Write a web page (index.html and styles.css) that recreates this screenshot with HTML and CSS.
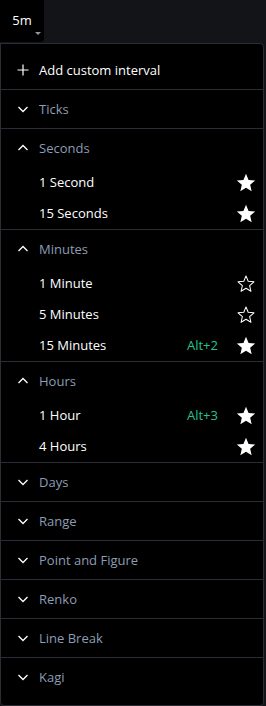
FILE: index.html
```html
<!DOCTYPE html>
<html>
<head>
<meta charset="utf-8">
<link rel="stylesheet" href="styles.css">
</head>
<body>
<div class="toolbar">
  <button class="interval-btn">5m<span class="caret"></span></button>
</div>
<div class="menu">
  <div class="row add">
    <svg class="ico" viewBox="0 0 12 12" width="12" height="12"><path d="M6 0.5v11M0.5 6h11" stroke="#fff" stroke-width="1.2" fill="none"/></svg>
    <span class="label">Add custom interval</span>
  </div>

  <div class="section">
    <div class="row head"><svg class="ico" viewBox="0 0 12 12" width="12" height="12"><path d="M1.5 4l4.5 4.5L10.5 4" stroke="#fff" stroke-width="1.3" fill="none"/></svg><span class="label">Ticks</span></div>
  </div>

  <div class="section">
    <div class="row head"><svg class="ico" viewBox="0 0 12 12" width="12" height="12"><path d="M1.5 8l4.5-4.5L10.5 8" stroke="#fff" stroke-width="1.3" fill="none"/></svg><span class="label">Seconds</span></div>
    <div class="row item"><span class="label">1 Second</span><svg class="star" viewBox="0 0 24 24"><path class="full" d="M12 17.27L18.18 21l-1.64-7.03L22 9.24l-7.19-.61L12 2 9.19 8.63 2 9.24l5.46 4.73L5.82 21z"/></svg></div>
    <div class="row item"><span class="label">15 Seconds</span><svg class="star" viewBox="0 0 24 24"><path class="full" d="M12 17.27L18.18 21l-1.64-7.03L22 9.24l-7.19-.61L12 2 9.19 8.63 2 9.24l5.46 4.73L5.82 21z"/></svg></div>
  </div>

  <div class="section">
    <div class="row head"><svg class="ico" viewBox="0 0 12 12" width="12" height="12"><path d="M1.5 8l4.5-4.5L10.5 8" stroke="#fff" stroke-width="1.3" fill="none"/></svg><span class="label">Minutes</span></div>
    <div class="row item"><span class="label">1 Minute</span><svg class="star" viewBox="0 0 24 24"><path class="empty" d="M12 16.6l5.4 3.3-1.45-6.15L20.7 9.6l-6.3-.54L12 3.2 9.6 9.06l-6.3.54 4.75 4.15L6.6 19.9z"/></svg></div>
    <div class="row item"><span class="label">5 Minutes</span><svg class="star" viewBox="0 0 24 24"><path class="empty" d="M12 16.6l5.4 3.3-1.45-6.15L20.7 9.6l-6.3-.54L12 3.2 9.6 9.06l-6.3.54 4.75 4.15L6.6 19.9z"/></svg></div>
    <div class="row item"><span class="label">15 Minutes</span><span class="hotkey">Alt+2</span><svg class="star" viewBox="0 0 24 24"><path class="full" d="M12 17.27L18.18 21l-1.64-7.03L22 9.24l-7.19-.61L12 2 9.19 8.63 2 9.24l5.46 4.73L5.82 21z"/></svg></div>
  </div>

  <div class="section">
    <div class="row head"><svg class="ico" viewBox="0 0 12 12" width="12" height="12"><path d="M1.5 8l4.5-4.5L10.5 8" stroke="#fff" stroke-width="1.3" fill="none"/></svg><span class="label">Hours</span></div>
    <div class="row item"><span class="label">1 Hour</span><span class="hotkey">Alt+3</span><svg class="star" viewBox="0 0 24 24"><path class="full" d="M12 17.27L18.18 21l-1.64-7.03L22 9.24l-7.19-.61L12 2 9.19 8.63 2 9.24l5.46 4.73L5.82 21z"/></svg></div>
    <div class="row item"><span class="label">4 Hours</span><svg class="star" viewBox="0 0 24 24"><path class="full" d="M12 17.27L18.18 21l-1.64-7.03L22 9.24l-7.19-.61L12 2 9.19 8.63 2 9.24l5.46 4.73L5.82 21z"/></svg></div>
  </div>

  <div class="section"><div class="row head"><svg class="ico" viewBox="0 0 12 12" width="12" height="12"><path d="M1.5 4l4.5 4.5L10.5 4" stroke="#fff" stroke-width="1.3" fill="none"/></svg><span class="label">Days</span></div></div>
  <div class="section"><div class="row head"><svg class="ico" viewBox="0 0 12 12" width="12" height="12"><path d="M1.5 4l4.5 4.5L10.5 4" stroke="#fff" stroke-width="1.3" fill="none"/></svg><span class="label">Range</span></div></div>
  <div class="section"><div class="row head"><svg class="ico" viewBox="0 0 12 12" width="12" height="12"><path d="M1.5 4l4.5 4.5L10.5 4" stroke="#fff" stroke-width="1.3" fill="none"/></svg><span class="label">Point and Figure</span></div></div>
  <div class="section"><div class="row head"><svg class="ico" viewBox="0 0 12 12" width="12" height="12"><path d="M1.5 4l4.5 4.5L10.5 4" stroke="#fff" stroke-width="1.3" fill="none"/></svg><span class="label">Renko</span></div></div>
  <div class="section"><div class="row head"><svg class="ico" viewBox="0 0 12 12" width="12" height="12"><path d="M1.5 4l4.5 4.5L10.5 4" stroke="#fff" stroke-width="1.3" fill="none"/></svg><span class="label">Line Break</span></div></div>
  <div class="section last"><div class="row head"><svg class="ico" viewBox="0 0 12 12" width="12" height="12"><path d="M1.5 4l4.5 4.5L10.5 4" stroke="#fff" stroke-width="1.3" fill="none"/></svg><span class="label">Kagi</span></div></div>
</div>
</body>
</html>
```

FILE: styles.css
```css
* { box-sizing: border-box; }
html, body {
  margin: 0;
  padding: 0;
  background: #131418;
  font-family: "Open Sans", "Noto Sans", sans-serif;
  font-size: 13px;
  color: #d1d4dc;
}
.toolbar {
  height: 43px;
  display: flex;
}
.interval-btn {
  position: relative;
  width: 44px;
  height: 42px;
  background: #000;
  border: none;
  border-radius: 0 0 4px 0;
  color: #fff;
  font-family: inherit;
  font-size: 13px;
  padding: 0 0 3px 0;
  text-align: center;
}
.caret {
  position: absolute;
  left: 35px;
  top: 32px;
  width: 0;
  height: 0;
  border-left: 3px solid transparent;
  border-right: 3px solid transparent;
  border-top: 3px solid #9598a1;
}
.menu {
  width: 264px;
  height: 663px;
  background: #000;
  border: 1px solid #2a2d35;
  border-radius: 0 4px 4px 4px;
  display: flex;
  flex-direction: column;
  padding-top: 7px;
}
.row {
  display: flex;
  align-items: center;
  padding: 0 6px 0 16px;
}
.ico {
  flex: none;
  width: 12px;
  height: 12px;
  margin-right: 10px;
}
.add {
  height: 39px;
  color: #fff;
  border-bottom: 1px solid #2a2d35;
}
.section {
  border-bottom: 1px solid #2a2d35;
}
.section.last { border-bottom: none; }
.head {
  height: 38px;
  color: #8c9db5;
}
.item {
  height: 31px;
  padding-left: 38px;
  color: #fff;
}
.item .label { flex: 1; margin-top: -1px; }
.hotkey {
  color: #27c28f;
  margin-right: 17px;
  margin-top: -1px;
}
.star {
  flex: none;
  width: 22px;
  height: 22px;
}
.star .full { fill: #fff; }
.star .empty { fill: none; stroke: #fff; stroke-width: 1.1; stroke-linejoin: round; }
```
